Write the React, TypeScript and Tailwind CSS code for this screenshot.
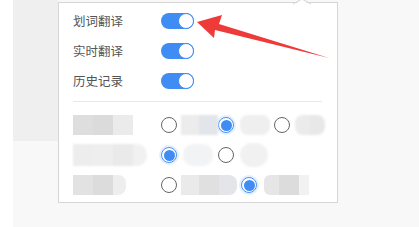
import React from "react";

const font = { fontFamily: '"Noto Sans CJK SC", "Noto Sans", sans-serif' };

function Toggle() {
  return (
    <div className="relative w-[33px] h-[16px] rounded-full bg-[#3f8cf4]">
      <div className="absolute right-0 top-0 w-[16px] h-[16px] rounded-full bg-white border border-[#3f8cf4]" />
    </div>
  );
}

function Radio({ on }: { on?: boolean }) {
  return on ? (
    <div className="w-[16px] h-[16px] shrink-0 rounded-full border border-[#4a92f5] bg-white flex items-center justify-center shadow-[0_0_0_2px_rgba(74,146,245,0.15)]">
      <div className="w-[11px] h-[11px] rounded-full bg-[#3f8cf4]" />
    </div>
  ) : (
    <div className="w-[16px] h-[16px] shrink-0 rounded-full border border-[#666] bg-white" />
  );
}

function ToggleRow({ label }: { label: string }) {
  return (
    <div className="flex items-center h-[30px]">
      <div className="w-[88px] text-[12.5px] text-[#555] leading-none" style={font}>
        {label}
      </div>
      <Toggle />
    </div>
  );
}

export default function App() {
  return (
    <div className="relative w-[419px] h-[227px] flex bg-[#f8f8f8] overflow-hidden">
      <div className="w-[13px] h-full bg-white" />
      <div className="w-[45px] h-full flex flex-col">
        <div className="h-[141px] bg-[#efefef]" />
        <div className="flex-1 bg-[#f8f8f8]" />
      </div>
      <div className="relative mt-[2px] w-[280px] h-[201px] bg-white border border-[#d6d6d6] pl-[14px] pt-[3px]">
        <ToggleRow label="划词翻译" />
        <ToggleRow label="实时翻译" />
        <ToggleRow label="历史记录" />
        <div className="mt-[5px] mr-[15px] h-px bg-[#e8e8e8]" />
        <div className="pt-[8px]">
          <div className="flex items-center h-[30px]">
            <div className="w-[88px] flex blur-[0.5px]">
              <div className="w-[20px] h-[20px] bg-[#dedede]" />
              <div className="w-[20px] h-[20px] bg-[#dbdbdb]" />
              <div className="w-[20px] h-[20px] bg-[#ebebeb]" />
            </div>
            <Radio />
            <div className="ml-[4px] w-[37px] h-[20px] flex blur-[1px]">
              <div className="w-[18px] bg-[#ececec]" />
              <div className="w-[19px] bg-[#e2e5ea]" />
            </div>
            <Radio on />
            <div className="ml-[6px] w-[30px] h-[20px] rounded-[8px] bg-[#efefef] blur-[1px]" />
            <div className="ml-[4px]">
              <Radio />
            </div>
            <div className="ml-[5px] w-[30px] h-[20px] flex blur-[1px]">
              <div className="w-[15px] bg-[#ebebeb] rounded-l-[8px]" />
              <div className="w-[15px] bg-[#e8e8e8] rounded-r-[8px]" />
            </div>
          </div>
          <div className="flex items-center h-[30px]">
            <div className="w-[88px] flex blur-[1px]">
              <div className="w-[20px] h-[22px] bg-[#ededed]" />
              <div className="w-[20px] h-[22px] bg-[#eeeeee]" />
              <div className="w-[20px] h-[22px] bg-[#eaeaea]" />
              <div className="w-[14px] h-[22px] bg-[#f1f1f1] rounded-r-[10px]" />
            </div>
            <Radio on />
            <div className="ml-[6px] w-[30px] h-[22px] rounded-[10px] bg-[#f2f3f5] blur-[1px]" />
            <div className="ml-[5px]">
              <Radio />
            </div>
            <div className="ml-[6px] w-[28px] h-[24px] rounded-[12px] bg-[#f1f1f1] blur-[1px]" />
          </div>
          <div className="flex items-center h-[30px]">
            <div className="w-[88px] flex blur-[0.5px]">
              <div className="w-[20px] h-[20px] bg-[#e2e2e2]" />
              <div className="w-[20px] h-[20px] bg-[#dcdcdc]" />
              <div className="w-[13px] h-[20px] bg-[#eeeeee] rounded-r-[8px]" />
            </div>
            <Radio />
            <div className="ml-[4px] w-[56px] h-[20px] flex blur-[0.5px]">
              <div className="w-[18px] bg-[#eaeaea]" />
              <div className="w-[20px] bg-[#e0e0e0]" />
              <div className="w-[18px] bg-[#e3e5e9] rounded-r-[8px]" />
            </div>
            <div className="ml-[4px]">
              <Radio on />
            </div>
            <div className="ml-[7px] w-[45px] h-[20px] flex blur-[0.5px]">
              <div className="w-[15px] bg-[#e6e6e6] rounded-l-[6px]" />
              <div className="w-[20px] bg-[#dcdcdc]" />
              <div className="w-[10px] bg-[#f2f2f2]" />
            </div>
          </div>
        </div>
        <svg className="absolute left-[234px] top-[-3px]" width="20" height="6" viewBox="0 0 20 6">
          <polygon points="0,5 9,0 18,5" fill="white" />
          <polyline points="0,4 9,-1 18,4" fill="none" stroke="#d6d6d6" strokeWidth="1" />
        </svg>
      </div>
      <svg className="absolute left-0 top-0" width="419" height="227" viewBox="0 0 419 227">
        <polygon points="197,22 222,15 219,24 329,58 215,30 214,38" fill="#ef3a3a" />
      </svg>
    </div>
  );
}
